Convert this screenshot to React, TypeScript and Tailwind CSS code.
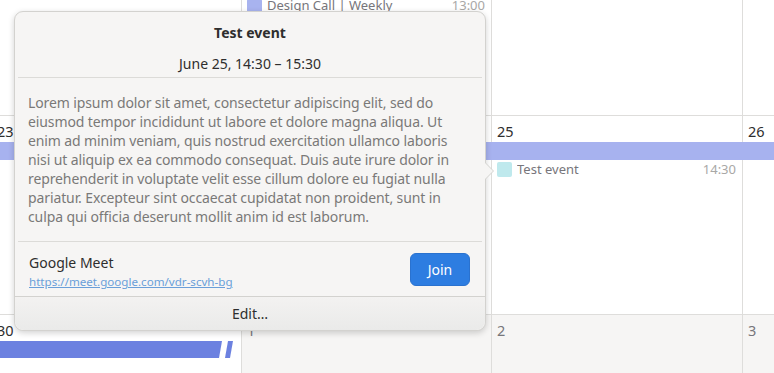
import React from "react";

const description = [
  "Lorem ipsum dolor sit amet, consectetur adipiscing elit, sed do",
  "eiusmod tempor incididunt ut labore et dolore magna aliqua. Ut",
  "enim ad minim veniam, quis nostrud exercitation ullamco laboris",
  "nisi ut aliquip ex ea commodo consequat. Duis aute irure dolor in",
  "reprehenderit in voluptate velit esse cillum dolore eu fugiat nulla",
  "pariatur. Excepteur sint occaecat cupidatat non proident, sunt in",
  "culpa qui officia deserunt mollit anim id est laborum.",
];

function EventRow({ color, title, time }: { color: string; title: string; time: string }) {
  return (
    <div className="flex items-center h-[16px] pr-[6px]">
      <span className={`w-[15px] h-[15px] rounded-[2px] shrink-0 ${color}`} />
      <span className="ml-[5px] text-[13px] text-[#77767b] flex-1 truncate">{title}</span>
      <span className="text-[13px] text-[#a9a8a6]">{time}</span>
    </div>
  );
}

function Popover() {
  return (
    <div className="absolute left-[14px] top-[11px] w-[472px] rounded-[9px] border border-[#d3d2cf] bg-[#f6f5f4] shadow-[0_2px_6px_rgba(0,0,0,0.18)]">
      {/* arrow */}
      <div className="absolute right-[-9px] top-[150px] w-0 h-0 border-y-[9px] border-y-transparent border-l-[9px] border-l-[#d3d2cf]" />
      <div className="absolute right-[-8px] top-[151px] w-0 h-0 border-y-[8px] border-y-transparent border-l-[8px] border-l-[#f6f5f4]" />

      <div className="px-[3px]">
        <div className="pt-[11px] text-center text-[14px] font-bold text-[#2e2e2e] leading-[20px]">Test event</div>
        <div className="mt-[11px] text-center text-[14px] text-[#2e2e2e] leading-[20px]">June 25, 14:30 – 15:30</div>
        <div className="mt-[3px] h-px bg-[#dcdbd8]" />

        <div className="px-[10px] pt-[15px] pb-[15px] text-[14px] leading-[19px] tracking-[-0.11px] text-[#7a7978]">
          {description.map((line) => (
            <div key={line} className="whitespace-nowrap">{line}</div>
          ))}
        </div>

        <div className="h-px bg-[#dcdbd8]" />

        <div className="flex justify-between h-[54px] pl-[11px] pr-[12px]">
          <div className="flex flex-col pt-[11px]">
            <span className="text-[14px] leading-[20px] text-[#2e2e2e]">Google Meet</span>
            <a className="text-[11.6px] leading-[18px] text-[#6a9fd9] underline">https://meet.google.com/vdr-scvh-bg</a>
          </div>
          <button className="self-center w-[60px] h-[33px] rounded-[6px] bg-[#2d7de1] text-white text-[14px] border border-[#2a72cf]">Join</button>
        </div>
      </div>

      <div className="h-px bg-[#d3d2cf]" />
      <div className="h-[33px] rounded-b-[9px] bg-gradient-to-b from-[#f3f2f1] to-[#eaeae9] flex items-center justify-center text-[14px] text-[#2e2e2e]">
        Edit…
      </div>
    </div>
  );
}

export default function App() {
  return (
    <div
      className="relative w-[774px] h-[373px] overflow-hidden bg-white"
      style={{ fontFamily: '"Noto Sans", sans-serif' }}
    >
      <div className="ml-[-10px] grid grid-cols-[252px_250px_251px_1fr] grid-rows-[116px_199px_1fr] h-full">
        {/* week 1 */}
        <div className="border-r border-b border-[#dedddb]" />
        <div className="border-r border-b border-[#dedddb] pl-[5px] -mt-[2px]">
          <EventRow color="bg-[#a8b3ef]" title="Design Call | Weekly" time="13:00" />
        </div>
        <div className="border-r border-b border-[#dedddb]" />
        <div className="border-b border-[#dedddb]" />

        {/* week 2 */}
        <div className="border-r border-b border-[#dedddb] pl-[7px] pt-[5px] text-[14.5px] text-[#2e2e2e]">23</div>
        <div className="border-r border-b border-[#dedddb] pl-[5px] pt-[5px] text-[14.5px] text-[#2e2e2e]">24</div>
        <div className="border-r border-b border-[#dedddb] pl-[5px] pt-[5px] text-[14.5px] text-[#2e2e2e]">
          25
          <div className="mt-[19px]">
            <EventRow color="bg-[#bfe9ed]" title="Test event" time="14:30" />
          </div>
        </div>
        <div className="border-b border-[#dedddb] pl-[5px] pt-[5px] text-[14.5px] text-[#2e2e2e]">26</div>

        {/* week 3 */}
        <div className="border-r border-[#dedddb] pl-[7px] pt-[5px] text-[14.5px] text-[#2e2e2e]">30</div>
        <div className="border-r border-[#dedddb] bg-[#f6f5f4] pl-[5px] pt-[5px] text-[14.5px] text-[#77767b]">1</div>
        <div className="border-r border-[#dedddb] bg-[#f6f5f4] pl-[5px] pt-[5px] text-[14.5px] text-[#77767b]">2</div>
        <div className="bg-[#f6f5f4] pl-[5px] pt-[5px] text-[14.5px] text-[#77767b]">3</div>
      </div>

      {/* multi-day bands */}
      <div className="absolute left-0 right-0 top-[142px] h-[18px] bg-[#a7b2ef]" />
      <div className="absolute left-0 top-[341px] h-[17px] w-[240px]">
        <svg width="240" height="17" viewBox="0 0 240 17">
          <polygon points="0,0 222,0 219,17 0,17" fill="#6c81e0" />
          <polygon points="228,0 233,0 230,17 225,17" fill="#6c81e0" />
        </svg>
      </div>

      <Popover />
    </div>
  );
}
